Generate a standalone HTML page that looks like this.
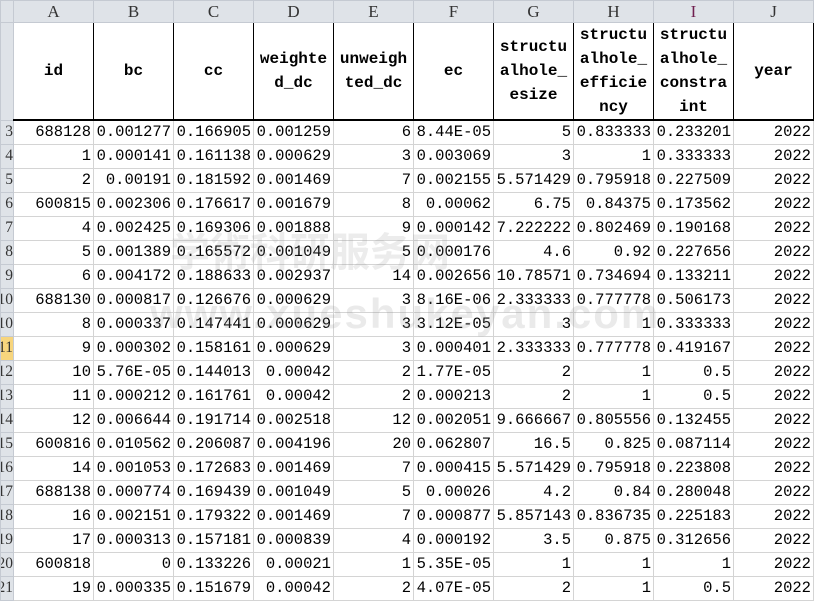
<!DOCTYPE html>
<html><head><meta charset="utf-8"><style>
body{margin:0;width:816px;height:595px;overflow:hidden;background:#fff;font-family:"Liberation Mono","Noto Sans CJK SC",monospace;}
table{border-collapse:collapse;table-layout:fixed;position:absolute;left:0;top:0;width:813px;}
td,th{padding:0;overflow:hidden;white-space:nowrap;box-sizing:border-box;}
.ch th{height:22px;background:#dfe3e8;border:1px solid #c5cad2;font-weight:normal;font-family:"Liberation Serif",serif;font-size:17px;line-height:20px;color:#333;text-align:center;}
.ch th.i{color:#702050}
.hd td{height:96px;border:1px solid #000;border-bottom:2px solid #000;text-align:center;font-weight:bold;font-size:16px;line-height:24px;white-space:normal;word-break:break-all;padding:0 2px;}
.rh{background:#dfe3e8;border:1px solid #c5cad2 !important;font-family:"Liberation Serif",serif;font-size:16px;color:#333;text-align:right;direction:rtl;}
.d td{height:24px;border:1px solid #d4d4d4;text-align:right;font-size:15.5px;padding:0 2px 0 0;line-height:22px;}
.d td.rh{padding:0;}
.sel{background:#f7d57d !important;}
.wm{position:absolute;left:170px;top:220px;font-size:40px;color:rgba(150,150,150,0.18);font-weight:bold;font-family:"Liberation Sans","Noto Sans CJK SC",sans-serif;}
.wm2{position:absolute;left:150px;top:290px;font-size:42px;color:rgba(150,150,150,0.2);font-weight:bold;font-family:"Liberation Sans",sans-serif;letter-spacing:2px}
</style></head><body>
<table>
<colgroup><col style="width:13px"><col style="width:80px"><col style="width:80px"><col style="width:80px"><col style="width:80px"><col style="width:80px"><col style="width:80px"><col style="width:80px"><col style="width:80px"><col style="width:80px"><col style="width:80px"></colgroup>
<tr class="ch"><th></th><th>A</th><th>B</th><th>C</th><th>D</th><th>E</th><th>F</th><th>G</th><th>H</th><th class="i">I</th><th>J</th></tr>
<tr class="hd"><td class="rh" style="border-bottom:1px solid #c5cad2"></td><td>id</td><td>bc</td><td>cc</td><td>weighte d_dc</td><td>unweigh ted_dc</td><td>ec</td><td>structu alhole_ esize</td><td>structu alhole_ efficie ncy</td><td>structu alhole_ constra int</td><td>year</td></tr>
<tr class="d"><td class="rh">3</td><td>688128</td><td>0.001277</td><td>0.166905</td><td>0.001259</td><td>6</td><td>8.44E-05</td><td>5</td><td>0.833333</td><td>0.233201</td><td>2022</td></tr>
<tr class="d"><td class="rh">4</td><td>1</td><td>0.000141</td><td>0.161138</td><td>0.000629</td><td>3</td><td>0.003069</td><td>3</td><td>1</td><td>0.333333</td><td>2022</td></tr>
<tr class="d"><td class="rh">5</td><td>2</td><td>0.00191</td><td>0.181592</td><td>0.001469</td><td>7</td><td>0.002155</td><td>5.571429</td><td>0.795918</td><td>0.227509</td><td>2022</td></tr>
<tr class="d"><td class="rh">6</td><td>600815</td><td>0.002306</td><td>0.176617</td><td>0.001679</td><td>8</td><td>0.00062</td><td>6.75</td><td>0.84375</td><td>0.173562</td><td>2022</td></tr>
<tr class="d"><td class="rh">7</td><td>4</td><td>0.002425</td><td>0.169306</td><td>0.001888</td><td>9</td><td>0.000142</td><td>7.222222</td><td>0.802469</td><td>0.190168</td><td>2022</td></tr>
<tr class="d"><td class="rh">8</td><td>5</td><td>0.001389</td><td>0.165572</td><td>0.001049</td><td>5</td><td>0.000176</td><td>4.6</td><td>0.92</td><td>0.227656</td><td>2022</td></tr>
<tr class="d"><td class="rh">9</td><td>6</td><td>0.004172</td><td>0.188633</td><td>0.002937</td><td>14</td><td>0.002656</td><td>10.78571</td><td>0.734694</td><td>0.133211</td><td>2022</td></tr>
<tr class="d"><td class="rh">10</td><td>688130</td><td>0.000817</td><td>0.126676</td><td>0.000629</td><td>3</td><td>8.16E-06</td><td>2.333333</td><td>0.777778</td><td>0.506173</td><td>2022</td></tr>
<tr class="d"><td class="rh">10</td><td>8</td><td>0.000337</td><td>0.147441</td><td>0.000629</td><td>3</td><td>3.12E-05</td><td>3</td><td>1</td><td>0.333333</td><td>2022</td></tr>
<tr class="d"><td class="rh sel">11</td><td>9</td><td>0.000302</td><td>0.158161</td><td>0.000629</td><td>3</td><td>0.000401</td><td>2.333333</td><td>0.777778</td><td>0.419167</td><td>2022</td></tr>
<tr class="d"><td class="rh">12</td><td>10</td><td>5.76E-05</td><td>0.144013</td><td>0.00042</td><td>2</td><td>1.77E-05</td><td>2</td><td>1</td><td>0.5</td><td>2022</td></tr>
<tr class="d"><td class="rh">13</td><td>11</td><td>0.000212</td><td>0.161761</td><td>0.00042</td><td>2</td><td>0.000213</td><td>2</td><td>1</td><td>0.5</td><td>2022</td></tr>
<tr class="d"><td class="rh">14</td><td>12</td><td>0.006644</td><td>0.191714</td><td>0.002518</td><td>12</td><td>0.002051</td><td>9.666667</td><td>0.805556</td><td>0.132455</td><td>2022</td></tr>
<tr class="d"><td class="rh">15</td><td>600816</td><td>0.010562</td><td>0.206087</td><td>0.004196</td><td>20</td><td>0.062807</td><td>16.5</td><td>0.825</td><td>0.087114</td><td>2022</td></tr>
<tr class="d"><td class="rh">16</td><td>14</td><td>0.001053</td><td>0.172683</td><td>0.001469</td><td>7</td><td>0.000415</td><td>5.571429</td><td>0.795918</td><td>0.223808</td><td>2022</td></tr>
<tr class="d"><td class="rh">17</td><td>688138</td><td>0.000774</td><td>0.169439</td><td>0.001049</td><td>5</td><td>0.00026</td><td>4.2</td><td>0.84</td><td>0.280048</td><td>2022</td></tr>
<tr class="d"><td class="rh">18</td><td>16</td><td>0.002151</td><td>0.179322</td><td>0.001469</td><td>7</td><td>0.000877</td><td>5.857143</td><td>0.836735</td><td>0.225183</td><td>2022</td></tr>
<tr class="d"><td class="rh">19</td><td>17</td><td>0.000313</td><td>0.157181</td><td>0.000839</td><td>4</td><td>0.000192</td><td>3.5</td><td>0.875</td><td>0.312656</td><td>2022</td></tr>
<tr class="d"><td class="rh">20</td><td>600818</td><td>0</td><td>0.133226</td><td>0.00021</td><td>1</td><td>5.35E-05</td><td>1</td><td>1</td><td>1</td><td>2022</td></tr>
<tr class="d"><td class="rh">21</td><td>19</td><td>0.000335</td><td>0.151679</td><td>0.00042</td><td>2</td><td>4.07E-05</td><td>2</td><td>1</td><td>0.5</td><td>2022</td></tr>
</table>
<div class="wm">学術科研服务网</div>
<div class="wm2">www.xueshukeyan.com</div>
</body></html>
